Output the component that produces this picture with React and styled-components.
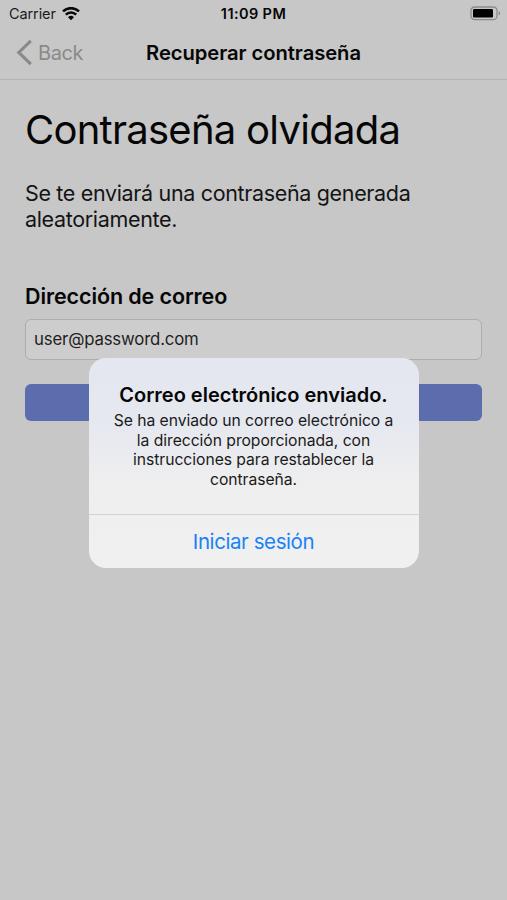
import React from "react";
import styled, { createGlobalStyle } from "styled-components";

const GlobalStyle = createGlobalStyle`
  * {
    box-sizing: border-box;
  }

  body {
    margin: 0;
    background: #c7c7c7;
    font-family: "Inter", "Liberation Sans", sans-serif;
    color: #060606;
  }

  h1, h2, p {
    margin: 0;
  }

  button, input {
    font-family: inherit;
  }
`;

const Screen = styled.div`
  position: relative;
  width: 100%;
  height: 900px;
  overflow: hidden;
  background: #c7c7c7;
`;

const StatusBar = styled.div`
  height: 26px;
  padding: 1px 6px 0 9px;
  display: grid;
  grid-template-columns: 1fr auto 1fr;
  align-items: center;
  font-size: 14.5px;
  line-height: 24px;
`;

const Carrier = styled.div`
  display: flex;
  align-items: center;
  gap: 6px;
  color: #1c1c1c;
  letter-spacing: -0.1px;
`;

const Clock = styled.span`
  margin-right: 3px;
  font-weight: 600;
  font-size: 14.5px;
  letter-spacing: 0.4px;
`;

const Battery = styled.svg`
  justify-self: end;
`;

const NavBar = styled.header`
  height: 54px;
  padding: 0 16px;
  display: grid;
  grid-template-columns: 1fr auto 1fr;
  align-items: center;
  border-bottom: 1px solid #b3b3b3;
`;

const BackButton = styled.button`
  display: flex;
  align-items: center;
  gap: 6px;
  padding: 0;
  border: none;
  background: none;
  color: #8a8a8a;
  font-size: 20px;
  letter-spacing: -0.4px;
`;

const NavTitle = styled.h2`
  font-size: 20.2px;
  font-weight: 600;
  letter-spacing: -0.05px;
`;

const Content = styled.main`
  padding: 25px 25px 0;
`;

const Heading = styled.h1`
  font-size: 40px;
  font-weight: 400;
  line-height: 50px;
  letter-spacing: -0.74px;
`;

const Description = styled.p`
  margin-top: 25px;
  font-size: 21.5px;
  line-height: 26.3px;
  letter-spacing: -0.34px;
  color: #141414;
`;

const Label = styled.label`
  display: block;
  margin-top: 49px;
  font-size: 21.5px;
  font-weight: 600;
  line-height: 28px;
  letter-spacing: -0.1px;
`;

const EmailInput = styled.input`
  display: block;
  width: 100%;
  height: 41px;
  margin-top: 9px;
  padding: 0 8px;
  border: 1px solid #adadad;
  border-radius: 6px;
  background: #cdcdcd;
  color: #1f1f1f;
  font-size: 16.8px;
  letter-spacing: -0.18px;
  outline: none;
`;

const SubmitButton = styled.button`
  display: block;
  width: 100%;
  height: 37px;
  margin-top: 24px;
  border: none;
  border-radius: 6px;
  background: #5b6dad;
`;

const Overlay = styled.div`
  position: absolute;
  inset: 0;
  display: flex;
  align-items: flex-start;
  justify-content: center;
  padding-top: 358px;
`;

const Alert = styled.section`
  width: 330px;
  height: 210px;
  display: flex;
  flex-direction: column;
  border-radius: 17px;
  overflow: hidden;
  background: linear-gradient(#e4e7ef 0%, #e6e8f0 30%, #efefef 62%, #f0f0f0 100%);
`;

const AlertBody = styled.div`
  flex: 1;
  padding-top: 24px;
  text-align: center;
`;

const AlertTitle = styled.h2`
  font-size: 20px;
  font-weight: 600;
  line-height: 26px;
`;

const AlertMessage = styled.p`
  margin-top: 3px;
  font-size: 15.7px;
  line-height: 19.6px;
  letter-spacing: -0.04px;
  color: #1a1a1a;
`;

const AlertAction = styled.button`
  height: 54px;
  padding: 0;
  border: none;
  border-top: 1px solid #d3d3d5;
  background: none;
  color: #1a82f7;
  font-size: 20.5px;
  letter-spacing: -0.42px;
`;

const WifiIcon = () => (
  <svg width="18" height="14" viewBox="0 0 18 14" fill="none" stroke="#080808">
    <path d="M1 4.4a11.5 11.5 0 0 1 16 0" strokeWidth="2.6" />
    <path d="M3.8 7.7a7.3 7.3 0 0 1 10.4 0" strokeWidth="2.5" />
    <path d="M9 13.2 6 10.2a4.3 4.3 0 0 1 6 0z" fill="#080808" stroke="none" />
  </svg>
);

const BatteryIcon = () => (
  <Battery width="31" height="15" viewBox="0 0 31 15" fill="none">
    <rect x="1" y="1" width="26" height="12.6" rx="3.6" stroke="#8c8c8c" strokeWidth="1.3" />
    <rect x="3" y="3" width="20" height="8.6" rx="1.3" fill="#000" />
    <path d="M28.6 5.2c2 .6 2 3.6 0 4.2z" fill="#8c8c8c" />
  </Battery>
);

const ChevronIcon = () => (
  <svg width="16" height="27" viewBox="0 0 16 27" fill="none">
    <path d="M14.8 1.8 2.8 13.4l12 11.8" stroke="#8a8a8a" strokeWidth="3.2" />
  </svg>
);

const App = () => {
  const [email, setEmail] = React.useState("user@password.com");
  const [showAlert, setShowAlert] = React.useState(true);

  return (
    <Screen>
      <GlobalStyle />
      <StatusBar>
        <Carrier>
          Carrier
          <WifiIcon />
        </Carrier>
        <Clock>11:09 PM</Clock>
        <BatteryIcon />
      </StatusBar>
      <NavBar>
        <BackButton>
          <ChevronIcon />
          Back
        </BackButton>
        <NavTitle>Recuperar contraseña</NavTitle>
      </NavBar>

      <Content>
        <Heading>Contraseña olvidada</Heading>
        <Description>
          Se te enviará una contraseña generada
          <br />
          aleatoriamente.
        </Description>
        <Label htmlFor="email">Dirección de correo</Label>
        <EmailInput
          id="email"
          type="email"
          value={email}
          onChange={(e) => setEmail(e.target.value)}
        />
        <SubmitButton type="submit" />
      </Content>

      {showAlert && (
        <Overlay>
          <Alert>
            <AlertBody>
              <AlertTitle>Correo electrónico enviado.</AlertTitle>
              <AlertMessage>
                Se ha enviado un correo electrónico a
                <br />
                la dirección proporcionada, con
                <br />
                instrucciones para restablecer la
                <br />
                contraseña.
              </AlertMessage>
            </AlertBody>
            <AlertAction onClick={() => setShowAlert(false)}>
              Iniciar sesión
            </AlertAction>
          </Alert>
        </Overlay>
      )}
    </Screen>
  );
};

export default App;
